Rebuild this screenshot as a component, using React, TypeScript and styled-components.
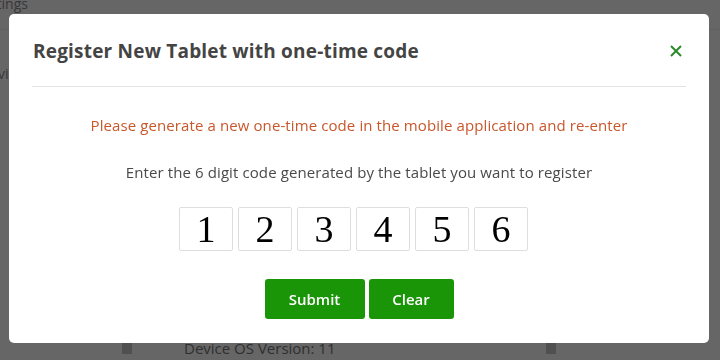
import React from "react";
import styled, { createGlobalStyle } from "styled-components";

const GlobalStyle = createGlobalStyle`
  html, body {
    margin: 0;
    padding: 0;
    width: 720px;
    height: 360px;
    overflow: hidden;
    background: #ffffff;
    font-family: "Open Sans", "Liberation Sans", sans-serif;
  }
  * {
    box-sizing: border-box;
  }
`;

/**
 * Page underneath the dialog.
 */
const Page = styled.div`
  width: 720px;
  height: 360px;
  display: flex;
  flex-direction: column;
  background: #ffffff;
  color: #8a8a8a;
`;

const PageHeader = styled.div`
  height: 36px;
  border-bottom: 1px solid #f0f0f0;
  font-size: 14px;
  line-height: 20px;
  margin-top: -6px;
  margin-left: -24px;
`;

const PageSide = styled.div`
  flex: 1;
  padding-top: 34px;
  margin-left: -20px;
  font-size: 14px;
`;

const PageRow = styled.div`
  display: flex;
  align-items: center;
  height: 24px;
  padding-left: 122px;
  font-size: 15px;
  color: #777;
`;

const Check = styled.span<{ $before?: number; $after?: number }>`
  width: 10px;
  height: 12px;
  background: #c8c8c8;
  margin-left: ${(p) => p.$before ?? 0}px;
  margin-right: ${(p) => p.$after ?? 0}px;
`;

/**
 * Dark backdrop over the page.
 */
const Backdrop = styled.div`
  position: fixed;
  inset: 0;
  background: rgba(0, 0, 0, 0.6);
`;

const Modal = styled.div`
  position: fixed;
  left: 9px;
  top: 14px;
  width: 700px;
  background: #ffffff;
  border-radius: 5px;
  display: flex;
  flex-direction: column;
  padding-bottom: 24px;
`;

const ModalHeader = styled.div`
  display: flex;
  justify-content: space-between;
  align-items: center;
  margin: 0 23px;
  padding: 25px 4px 23px 1px;
  border-bottom: 1px solid #e3e3e3;
`;

const ModalTitle = styled.h3`
  margin: 0;
  font-size: 19px;
  line-height: 24px;
  font-weight: 700;
  letter-spacing: 0.2px;
  color: #444444;
`;

const CloseButton = styled.button`
  border: none;
  background: transparent;
  padding: 0;
  width: 12px;
  height: 12px;
  display: flex;
  cursor: pointer;
`;

const ModalBody = styled.div`
  display: flex;
  flex-direction: column;
  align-items: center;
  padding-top: 28px;
`;

const Notice = styled.p<{ $warn?: boolean; $after: number }>`
  margin: 0 0 ${(p) => p.$after}px 0;
  font-size: 15px;
  line-height: 20px;
  letter-spacing: 0.1px;
  color: ${(p) => (p.$warn ? "#c8572c" : "#4a4a4a")};
`;

const CodeRow = styled.div`
  display: flex;
  gap: 5px;
  padding-right: 11px;
  margin-bottom: 28px;
`;

const CodeBox = styled.div`
  width: 54px;
  height: 44px;
  border: 1px solid #dedede;
  border-radius: 2px;
  display: flex;
  align-items: center;
  justify-content: center;
  font-family: "Liberation Serif", "Times New Roman", serif;
  font-size: 38px;
  color: #000000;
`;

const ButtonRow = styled.div`
  display: flex;
  gap: 4px;
`;

const ActionButton = styled.button<{ $width: number }>`
  width: ${(p) => p.$width}px;
  height: 40px;
  border: none;
  border-radius: 3px;
  background: #1a9507;
  color: #ffffff;
  font-family: "Open Sans", "Liberation Sans", sans-serif;
  font-size: 15px;
  font-weight: 600;
  cursor: pointer;
`;

const digits = ["1", "2", "3", "4", "5", "6"];

const App: React.FC = () => (
  <>
    <GlobalStyle />
    <Page>
      <PageHeader>Settings</PageHeader>
      <PageSide>Device</PageSide>
      <PageRow>
        <Check $after={52} />
        Device OS Version: 11
        <Check $before={210} />
      </PageRow>
    </Page>
    <Backdrop />
    <Modal>
      <ModalHeader>
        <ModalTitle>Register New Tablet with one-time code</ModalTitle>
        <CloseButton aria-label="close">
          <svg width="12" height="12" viewBox="0 0 12 12">
            <path d="M1 1 L11 11 M11 1 L1 11" stroke="#2b8a2b" strokeWidth="2" />
          </svg>
        </CloseButton>
      </ModalHeader>
      <ModalBody>
        <Notice $warn $after={27}>
          Please generate a new one-time code in the mobile application and re-enter
        </Notice>
        <Notice $after={25}>
          Enter the 6 digit code generated by the tablet you want to register
        </Notice>
        <CodeRow>
          {digits.map((d) => (
            <CodeBox key={d}>{d}</CodeBox>
          ))}
        </CodeRow>
        <ButtonRow>
          <ActionButton $width={100}>Submit</ActionButton>
          <ActionButton $width={85}>Clear</ActionButton>
        </ButtonRow>
      </ModalBody>
    </Modal>
  </>
);

export default App;
